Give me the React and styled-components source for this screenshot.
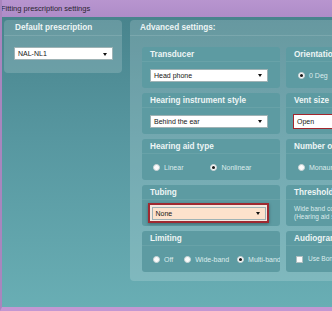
import React from "react";
import styled, { createGlobalStyle } from "styled-components";

const GlobalStyle = createGlobalStyle`
  body {
    margin: 0;
    font-family: "Liberation Sans", Arial, sans-serif;
  }
`;

const Window = styled.div`
  width: 332px;
  height: 311px;
  box-sizing: border-box;
  display: flex;
  flex-direction: column;
  overflow: hidden;
  border-left: 2px solid #a985be;
  border-bottom: 4px solid #c497d2;
  background: linear-gradient(180deg, #46818a 0%, #5797a0 45%, #69aeb4 100%);
`;

const TitleBar = styled.div`
  height: 17px;
  flex-shrink: 0;
  display: flex;
  align-items: center;
  padding-left: 1px;
  margin-left: -2px;
  background: linear-gradient(180deg, #b895cf 0%, #ae8cc8 100%);
  color: #2a2430;
  font-size: 7.5px;
  white-space: nowrap;
`;

const Body = styled.div`
  display: flex;
  align-items: flex-start;
  gap: 8px;
  padding: 3px 0 0 2px;
`;

const Panel = styled.div`
  flex-shrink: 0;
  width: ${(p) => p.$width}px;
  border-radius: ${(p) => (p.$open ? "4px 0 0 4px" : "4px")};
  background: rgba(255, 255, 255, 0.17);
  box-sizing: border-box;
`;

const PanelHeader = styled.div`
  height: 15px;
  display: flex;
  align-items: center;
  padding-left: ${(p) => p.$indent}px;
  border-bottom: 1px solid rgba(255, 255, 255, 0.12);
  color: #eef5f5;
  font-size: 8.2px;
  font-weight: bold;
  white-space: nowrap;
`;

const LeftBody = styled.div`
  padding: 11px 9px 13px 10px;
`;

const CardGrid = styled.div`
  display: grid;
  grid-template-columns: 138px 138px;
  grid-auto-rows: 41px;
  column-gap: 6px;
  row-gap: 5px;
  padding: 11px 0 9px 12px;
`;

const Card = styled.div`
  display: flex;
  flex-direction: column;
  border-radius: 3px;
  background: #5d9ba2;
  overflow: hidden;
`;

const CardHeader = styled.div`
  height: 14px;
  flex-shrink: 0;
  display: flex;
  align-items: center;
  padding-left: 8px;
  border-bottom: 1px solid rgba(255, 255, 255, 0.07);
  color: #eef5f5;
  font-size: 8.2px;
  font-weight: bold;
  white-space: nowrap;
`;

const CardBody = styled.div`
  flex: 1;
  display: flex;
  align-items: center;
  gap: ${(p) => p.$gap || 0}px;
  padding: 0 12px 0 ${(p) => p.$left || 8}px;
  white-space: nowrap;
`;

const SelectBox = styled.div`
  position: relative;
  flex: 1;
  height: ${(p) => (p.$tall ? 15 : 13)}px;
  box-sizing: border-box;
  display: flex;
  align-items: center;
  padding-left: 3px;
  background: ${(p) => p.$bg || "#ffffff"};
  border: 1px solid ${(p) => (p.$alert ? "#a3262d" : "#9fb3b5")};
  ${(p) => p.$alert && "border-width: 1.5px;"}
  color: #151515;
  font-size: 7px;
  white-space: nowrap;

  &::after {
    content: "";
    position: absolute;
    right: 5px;
    top: 50%;
    margin-top: -1px;
    border-left: 2.5px solid transparent;
    border-right: 2.5px solid transparent;
    border-top: 3px solid #111;
  }
`;

const AlertFrame = styled.div`
  flex: 1;
  display: flex;
  margin: 0 -1px 0 -2px;
  padding: 1.5px;
  border: 2px solid #9e2a31;
  box-shadow: 0 1px 3px rgba(0, 0, 0, 0.35);
  background: #f5e9e0;
`;

const Option = styled.label`
  display: flex;
  align-items: center;
  gap: 4px;
  color: #dcebec;
  font-size: 7px;
  margin-right: ${(p) => p.$space || 0}px;
`;

const Radio = styled.span`
  width: 7px;
  height: 7px;
  box-sizing: border-box;
  border-radius: 50%;
  background: #fbfbfb;
  border: 1px solid #c9d4d6;
  display: flex;
  align-items: center;
  justify-content: center;

  &::after {
    content: "";
    width: 3px;
    height: 3px;
    border-radius: 50%;
    background: ${(p) => (p.$checked ? "#1a1a1a" : "transparent")};
  }
`;

const Check = styled.span`
  width: 7px;
  height: 7px;
  box-sizing: border-box;
  background: #fbfbfb;
  border: 1px solid #aebec0;
`;

const Note = styled.div`
  color: #dcebec;
  font-size: 6.5px;
  line-height: 8px;
`;

const Dropdown = ({ value, bg, alert, tall }) => (
  <SelectBox $bg={bg} $alert={alert} $tall={tall}>
    {value}
  </SelectBox>
);

const RadioOption = ({ label, checked, space }) => (
  <Option $space={space}>
    <Radio $checked={checked} />
    {label}
  </Option>
);

export default function App() {
  return (
    <>
      <GlobalStyle />
      <Window>
        <TitleBar>Fitting prescription settings</TitleBar>
        <Body>
          <Panel $width={118}>
            <PanelHeader $indent={11}>Default prescription</PanelHeader>
            <LeftBody>
              <Dropdown value="NAL-NL1" />
            </LeftBody>
          </Panel>

          <Panel $width={300} $open>
            <PanelHeader $indent={10}>Advanced settings:</PanelHeader>
            <CardGrid>
              <Card>
                <CardHeader>Transducer</CardHeader>
                <CardBody>
                  <Dropdown value="Head phone" />
                </CardBody>
              </Card>
              <Card>
                <CardHeader>Orientation</CardHeader>
                <CardBody $left={12}>
                  <RadioOption label="0 Deg" checked />
                </CardBody>
              </Card>

              <Card>
                <CardHeader>Hearing instrument style</CardHeader>
                <CardBody>
                  <Dropdown value="Behind the ear" />
                </CardBody>
              </Card>
              <Card>
                <CardHeader>Vent size</CardHeader>
                <CardBody $left={7}>
                  <Dropdown value="Open" alert tall />
                </CardBody>
              </Card>

              <Card>
                <CardHeader>Hearing aid type</CardHeader>
                <CardBody $left={11}>
                  <RadioOption label="Linear" space={27} />
                  <RadioOption label="Nonlinear" checked />
                </CardBody>
              </Card>
              <Card>
                <CardHeader>Number of channels</CardHeader>
                <CardBody $left={12}>
                  <RadioOption label="Monaural" />
                </CardBody>
              </Card>

              <Card>
                <CardHeader>Tubing</CardHeader>
                <CardBody>
                  <AlertFrame>
                    <Dropdown value="None" bg="#fde2cc" />
                  </AlertFrame>
                </CardBody>
              </Card>
              <Card>
                <CardHeader>Threshold</CardHeader>
                <CardBody>
                  <Note>
                    Wide band compression threshold
                    <br />
                    (Hearing aid setting)
                  </Note>
                </CardBody>
              </Card>

              <Card>
                <CardHeader>Limiting</CardHeader>
                <CardBody $left={11}>
                  <RadioOption label="Off" space={11} />
                  <RadioOption label="Wide-band" space={8} />
                  <RadioOption label="Multi-band" checked />
                </CardBody>
              </Card>
              <Card>
                <CardHeader>Audiogram</CardHeader>
                <CardBody $left={10} $gap={5}>
                  <Check />
                  <Note>Use Bone conduction</Note>
                </CardBody>
              </Card>
            </CardGrid>
          </Panel>
        </Body>
      </Window>
    </>
  );
}
